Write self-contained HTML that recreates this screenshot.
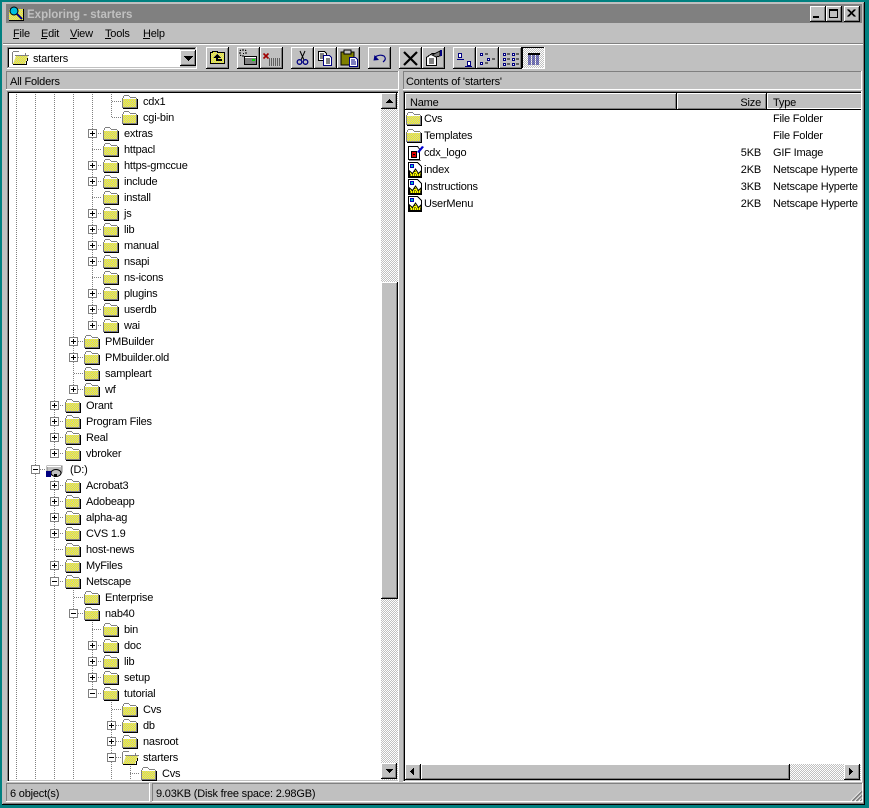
<!DOCTYPE html>
<html><head><meta charset="utf-8"><title>Exploring - starters</title>
<style>
html,body{margin:0;padding:0;background:#008080;width:869px;height:808px;overflow:hidden}
svg{display:block}
text{font-family:"Liberation Sans",sans-serif;font-size:11px;letter-spacing:-.2px;fill:#000;shape-rendering:auto}
.b{fill:#000}.g{fill:#808080}.w{fill:#fff}.c{fill:#c0c0c0}
</style></head><body>
<svg xmlns="http://www.w3.org/2000/svg" width="869" height="808" viewBox="0 0 869 808" shape-rendering="crispEdges">
<defs>
<pattern id="d" width="2" height="2" patternUnits="userSpaceOnUse"><rect width="2" height="2" fill="#c0c0c0"/><rect width="1" height="1" fill="#fff"/><rect x="1" y="1" width="1" height="1" fill="#fff"/></pattern>
<pattern id="y" width="2" height="2" patternUnits="userSpaceOnUse"><rect width="2" height="2" fill="#ffff00"/><rect width="1" height="1" fill="#c0c0c0"/><rect x="1" y="1" width="1" height="1" fill="#c0c0c0"/></pattern>
<pattern id="dv" width="1" height="2" patternUnits="userSpaceOnUse"><rect width="1" height="1" fill="#808080"/></pattern>
<pattern id="dh" width="2" height="1" patternUnits="userSpaceOnUse"><rect width="1" height="1" fill="#808080"/></pattern>
<symbol id="f" width="16" height="14" viewBox="0 0 16 14">
<rect x="1" y="3" width="13" height="9" fill="url(#y)"/>
<rect x="2" y="0" width="5" height="1" fill="#808080"/><rect x="1" y="1" width="1" height="2" fill="#808080"/><rect x="7" y="1" width="1" height="1" fill="#808080"/><rect x="8" y="2" width="6" height="1" fill="#808080"/>
<rect x="2" y="1" width="5" height="2" fill="#fff"/>
<rect x="0" y="3" width="1" height="10" fill="#808080"/><rect x="1" y="3" width="13" height="1" fill="#fff"/><rect x="14" y="3" width="1" height="10" fill="#808080"/><rect x="1" y="12" width="14" height="1" fill="#808080"/><rect x="15" y="4" width="1" height="10" fill="#000"/><rect x="1" y="13" width="15" height="1" fill="#000"/>
</symbol>
<symbol id="o" width="17" height="14" viewBox="0 0 17 14">
<rect x="1" y="0" width="6" height="1" fill="#808080"/><rect x="0" y="1" width="1" height="12" fill="#808080"/><rect x="7" y="1" width="6" height="1" fill="#808080"/><rect x="1" y="1" width="12" height="3" fill="#fff"/><rect x="13" y="2" width="1" height="3" fill="#808080"/>
<path d="M1 13L4 5H16L13 13Z" fill="url(#y)" shape-rendering="auto"/>
<rect x="3" y="4" width="14" height="1" fill="#808080"/><rect x="1" y="13" width="13" height="1" fill="#000"/><rect x="14" y="10" width="1" height="4" fill="#000"/><rect x="15" y="7" width="1" height="3" fill="#000"/>
</symbol>
<symbol id="p" width="9" height="9" viewBox="0 0 9 9"><rect width="9" height="9" fill="#808080"/><rect x="1" y="1" width="7" height="7" fill="#fff"/><rect x="2" y="4" width="5" height="1" fill="#000"/><rect x="4" y="2" width="1" height="5" fill="#000"/></symbol>
<symbol id="m" width="9" height="9" viewBox="0 0 9 9"><rect width="9" height="9" fill="#808080"/><rect x="1" y="1" width="7" height="7" fill="#fff"/><rect x="2" y="4" width="5" height="1" fill="#000"/></symbol>
<symbol id="bt" width="23" height="22" viewBox="0 0 23 22"><rect width="23" height="22" fill="#000"/><rect width="22" height="21" fill="#fff"/><rect x="1" y="1" width="21" height="20" fill="#808080"/><rect x="1" y="1" width="20" height="19" fill="#c0c0c0"/></symbol>
<symbol id="sb" width="16" height="16" viewBox="0 0 16 16"><rect width="16" height="16" fill="#000"/><rect width="15" height="15" fill="#fff"/><rect x="1" y="1" width="14" height="14" fill="#808080"/><rect x="1" y="1" width="13" height="13" fill="#c0c0c0"/></symbol>
<symbol id="h" width="15" height="16" viewBox="0 0 15 16">
<path d="M0 0H10L14 4V15H0Z" fill="#fff"/><path d="M0.5 .5H9.5L13.5 4.500V15.500H.5Z" fill="none" stroke="#000"/>
<rect x="2" y="2" width="4" height="4" fill="#0000c0"/><rect x="3" y="3" width="2" height="2" fill="#00c0c0"/>
<path d="M1.500 14.500V9L4.500 11.500L7.500 7L10.500 11.500L13 9V14.500Z" fill="#ffff00" stroke="#000" shape-rendering="auto"/>
<path d="M2 13H13M4 11V13M7 9V13M10 11V13" stroke="#000" fill="none" stroke-dasharray="1 1"/>
</symbol>
<symbol id="gi" width="16" height="16" viewBox="0 0 16 16">
<rect x="0" y="1" width="12" height="14" fill="#fff"/><path d="M.5 1.500H9.500L11.500 4V14.500H.5Z" fill="none" stroke="#000"/><rect x="1" y="15" width="12" height="1" fill="#808080"/>
<rect x="3" y="6" width="6" height="7" fill="#000"/><rect x="4" y="7" width="4" height="5" fill="#e00000"/><rect x="5" y="9" width="2" height="1" fill="#000"/>
<path d="M9 7L14 1L16 2L11 8Z" fill="#0000d0" shape-rendering="auto"/>
</symbol>
</defs>

<rect width="869" height="808" fill="#008080"/>
<rect x="2" y="2" width="863" height="803" class="b"/>
<rect x="2" y="2" width="862" height="802" fill="#fff" opacity=".75"/>
<rect x="3" y="3" width="861" height="801" class="g"/>
<rect x="3" y="3" width="860" height="800" class="c"/>

<!-- title bar -->
<rect x="6" y="4" width="856" height="19" class="g"/>
<rect x="9" y="8" width="14" height="13" fill="url(#y)"/><rect x="9" y="8" width="14" height="1" fill="#808080"/><rect x="9" y="20" width="15" height="1" class="b"/><rect x="23" y="9" width="1" height="12" class="b"/>
<circle cx="14" cy="11" r="4" fill="#00c0e0" stroke="#000" shape-rendering="auto"/><path d="M17 14L22 19" stroke="#000080" stroke-width="2" shape-rendering="auto"/>
<text x="27" y="18" style="font-weight:bold;font-size:11.5px;letter-spacing:0;fill:#c0c0c0">Exploring - starters</text>
<use href="#sb" x="810" y="6"/><rect x="813" y="16" width="6" height="2" class="b"/>
<use href="#sb" x="826" y="6"/><rect x="829" y="9" width="9" height="9" class="b"/><rect x="830" y="11" width="7" height="6" class="c"/>
<use href="#sb" x="844" y="6"/><path d="M848 10l7 7M849 10l7 7M855 10l-7 7M856 10l-7 7" stroke="#000" shape-rendering="auto" transform="translate(-.5 -.5)"/>

<!-- menu -->
<text x="13" y="37">File</text><rect x="13" y="38" width="6" height="1" class="b"/>
<text x="41" y="37">Edit</text><rect x="41" y="38" width="6" height="1" class="b"/>
<text x="70" y="37">View</text><rect x="70" y="38" width="7" height="1" class="b"/>
<text x="105" y="37">Tools</text><rect x="105" y="38" width="6" height="1" class="b"/>
<text x="143" y="37">Help</text><rect x="143" y="38" width="7" height="1" class="b"/>
<rect x="3" y="43" width="860" height="1" class="g"/><rect x="3" y="44" width="860" height="1" class="w"/>

<!-- combo -->
<rect x="7" y="47" width="190" height="22" class="w"/><rect x="7" y="47" width="189" height="21" class="g"/><rect x="8" y="48" width="188" height="20" class="c"/><rect x="8" y="48" width="187" height="1" class="b"/><rect x="8" y="48" width="1" height="19" class="b"/>
<rect x="9" y="49" width="171" height="18" class="w"/>
<use href="#o" x="12" y="51"/>
<text x="33" y="62">starters</text>
<use href="#sb" x="180" y="50"/><path d="M184 56h9v1h-1v1h-1v1h-1v1h-1v1h-1v-1h-1v-1h-1v-1h-1v-1h-1z" class="b"/>

<!-- toolbar buttons -->
<use href="#bt" x="206" y="47"/><use href="#bt" x="237" y="47"/><use href="#bt" x="260" y="47"/><use href="#bt" x="291" y="47"/><use href="#bt" x="314" y="47"/><use href="#bt" x="337" y="47"/><use href="#bt" x="368" y="47"/><use href="#bt" x="399" y="47"/><use href="#bt" x="422" y="47"/><use href="#bt" x="453" y="47"/><use href="#bt" x="476" y="47"/><use href="#bt" x="499" y="47"/>
<rect x="522" y="47" width="23" height="22" class="w"/><rect x="522" y="47" width="22" height="21" class="b"/><rect x="523" y="48" width="21" height="20" fill="url(#d)"/>
<!-- up -->
<path d="M210.500 63.500V52.500H212.500V51.500H217.500V52.500H224.500V63.500Z" fill="url(#y)" stroke="#000"/><path d="M217 54L213 58H216V61H222V59H218V58H221Z" class="b"/>
<!-- map drive -->
<rect x="244" y="56" width="13" height="9" class="b"/><rect x="245" y="57" width="11" height="7" class="g"/><rect x="245" y="57" width="11" height="1" class="w"/><rect x="252" y="59" width="3" height="2" fill="#00e000"/>
<path d="M243 49v2M243 55v2M239 53h2M245 53h2M240 50l1 1M246 50l-1 1M240 56l1-1" stroke="#000"/><rect x="243" y="53" width="1" height="1" class="b"/>
<!-- disconnect -->
<path d="M263.500 53.500l5 5M268.500 53.500l-5 5" stroke="#a00000" stroke-width="1.600" shape-rendering="auto"/>
<path d="M269 59h12M269 61h12M269 63h12M269 65h12" stroke="#000" stroke-dasharray="1 1"/>
<!-- cut -->
<path d="M300 51l4 9M305 51l-4 9" stroke="#000" fill="none" shape-rendering="auto"/><circle cx="299.500" cy="62" r="2.300" fill="none" stroke="#000080" stroke-width="1.300" shape-rendering="auto"/><circle cx="305.500" cy="62" r="2.300" fill="none" stroke="#000080" stroke-width="1.300" shape-rendering="auto"/>
<!-- copy -->
<path d="M318.500 51.500H324.500L326.500 53.500V60.500H318.500Z" fill="#fff" stroke="#000"/><path d="M324.500 55.500H329.500L331.500 57.500V65.500H323.500V55.500Z" fill="#fff" stroke="#000080"/><path d="M320 54h4M320 56h3M320 58h3M326 59h4M326 61h4M326 63h4" stroke="#000"/>
<!-- paste -->
<rect x="341" y="52" width="13" height="13" fill="#808000" stroke="#000"/><rect x="344" y="50" width="7" height="4" fill="#c0c0c0" stroke="#000"/><path d="M349.500 57.500H355.500L357.500 59.500V66.500H349.500Z" fill="#fff" stroke="#000080"/><path d="M351 60h4M351 62h5M351 64h5" stroke="#000080"/>
<!-- undo -->
<path d="M375 57Q380 54 384 56Q387 59 383 62" fill="none" stroke="#000080" stroke-width="1.200" shape-rendering="auto"/><path d="M373.500 60.500L374.500 55L379 60Z" fill="#000080" shape-rendering="auto"/>
<!-- delete X -->
<path d="M404 52L417 65M417 52L404 65" stroke="#000" stroke-width="2.200" shape-rendering="auto"/>
<!-- props -->
<path d="M426.500 57.500L432 53.500H436.500V65.500H426.500Z" fill="#fff" stroke="#000"/><path d="M429 59h5M429 61h5M429 63h5" stroke="#000"/><path d="M432 55L440 51V56L436 57Z" fill="#808080" stroke="#000"/><rect x="440" y="50" width="2" height="6" fill="#000080"/>
<!-- views -->
<path d="M458.500 53.500H461.500V57.500H458.500ZM467.500 61.500H470.500V65.500H467.500Z" fill="#fff" stroke="#000080"/><rect x="457" y="59" width="7" height="1" fill="#000080"/><rect x="465" y="66" width="7" height="1" fill="#000080"/>
<path d="M480.500 53.500h2v2h-2zM487.500 58.500h2v2h-2zM480.500 62.500h2v2h-2z" fill="#fff" stroke="#000080"/><path d="M485 54h3M492 59h3M485 63h3" stroke="#000"/>
<path d="M503.500 53.500h2v2h-2zM512.500 53.500h2v2h-2zM503.500 58.500h2v2h-2zM512.500 58.500h2v2h-2zM503.500 63.500h2v2h-2zM512.500 63.500h2v2h-2z" fill="#fff" stroke="#000080"/><path d="M507 54h3M516 54h3M507 59h3M516 59h3M507 64h3M516 64h3" stroke="#000"/>
<rect x="528" y="53" width="12" height="2" class="b"/><path d="M528 56h12M528 58h12M528 60h12M528 62h12M528 64h12" stroke="#000080" stroke-dasharray="3 1"/>

<!-- pane headers -->
<rect x="6" y="71" width="393" height="19" class="w"/><rect x="6" y="71" width="392" height="18" class="g"/><rect x="7" y="72" width="391" height="17" class="c"/>
<text x="10" y="85">All Folders</text>
<rect x="403" y="71" width="459" height="19" class="w"/><rect x="403" y="71" width="458" height="18" class="g"/><rect x="404" y="72" width="457" height="17" class="c"/>
<text x="406" y="85">Contents of 'starters'</text>

<!-- tree pane -->
<rect x="7" y="91" width="392" height="691" class="w"/><rect x="7" y="91" width="391" height="690" class="g"/><rect x="8" y="92" width="390" height="689" class="b"/><rect x="9" y="93" width="389" height="688" class="c"/><rect x="9" y="93" width="372" height="687" class="w"/>
<rect x="381" y="93" width="17" height="687" fill="url(#d)"/>
<use href="#sb" x="381" y="93"/><path d="M389 98h1v1h1v1h1v1h1v1h-7v-1h1v-1h1v-1h1z" class="b" transform="translate(0 1)"/>
<rect x="381" y="282" width="17" height="317" class="b"/><rect x="381" y="282" width="16" height="316" class="w"/><rect x="382" y="283" width="15" height="315" class="g"/><rect x="382" y="283" width="14" height="314" class="c"/>
<use href="#sb" x="381" y="763"/><path d="M386 769h7v1h-1v1h-1v1h-1v1h-1v-1h-1v-1h-1v-1h-1z" class="b"/>

<!-- tree lines -->
<rect x="16" y="93" width="1" height="686" fill="url(#dv)"/>
<rect x="35" y="93" width="1" height="686" fill="url(#dv)"/>
<rect x="54" y="93" width="1" height="360" fill="url(#dv)"/>
<rect x="54" y="469" width="1" height="310" fill="url(#dv)"/>
<rect x="73" y="93" width="1" height="296" fill="url(#dv)"/>
<rect x="73" y="581" width="1" height="198" fill="url(#dv)"/>
<rect x="92" y="93" width="1" height="232" fill="url(#dv)"/>
<rect x="92" y="613" width="1" height="80" fill="url(#dv)"/>
<rect x="111" y="93" width="1" height="24" fill="url(#dv)"/>
<rect x="111" y="693" width="1" height="86" fill="url(#dv)"/>
<rect x="130" y="757" width="1" height="22" fill="url(#dv)"/>
<g fill="url(#dh)">
<rect x="111" y="101" width="10" height="1"/><rect x="111" y="117" width="10" height="1"/>
<rect x="92" y="133" width="10" height="1"/><rect x="92" y="149" width="10" height="1"/><rect x="92" y="165" width="10" height="1"/><rect x="92" y="181" width="10" height="1"/><rect x="92" y="197" width="10" height="1"/><rect x="92" y="213" width="10" height="1"/><rect x="92" y="229" width="10" height="1"/><rect x="92" y="245" width="10" height="1"/><rect x="92" y="261" width="10" height="1"/><rect x="92" y="277" width="10" height="1"/><rect x="92" y="293" width="10" height="1"/><rect x="92" y="309" width="10" height="1"/><rect x="92" y="325" width="10" height="1"/>
<rect x="73" y="341" width="10" height="1"/><rect x="73" y="357" width="10" height="1"/><rect x="73" y="373" width="10" height="1"/><rect x="73" y="389" width="10" height="1"/>
<rect x="54" y="405" width="10" height="1"/><rect x="54" y="421" width="10" height="1"/><rect x="54" y="437" width="10" height="1"/><rect x="54" y="453" width="10" height="1"/>
<rect x="35" y="469" width="10" height="1"/>
<rect x="54" y="485" width="10" height="1"/><rect x="54" y="501" width="10" height="1"/><rect x="54" y="517" width="10" height="1"/><rect x="54" y="533" width="10" height="1"/><rect x="54" y="549" width="10" height="1"/><rect x="54" y="565" width="10" height="1"/><rect x="54" y="581" width="10" height="1"/>
<rect x="73" y="597" width="10" height="1"/><rect x="73" y="613" width="10" height="1"/>
<rect x="92" y="629" width="10" height="1"/><rect x="92" y="645" width="10" height="1"/><rect x="92" y="661" width="10" height="1"/><rect x="92" y="677" width="10" height="1"/><rect x="92" y="693" width="10" height="1"/>
<rect x="111" y="709" width="10" height="1"/><rect x="111" y="725" width="10" height="1"/><rect x="111" y="741" width="10" height="1"/><rect x="111" y="757" width="10" height="1"/>
<rect x="130" y="773" width="10" height="1"/>
</g>

<!-- tree boxes -->
<use href="#p" x="88" y="129"/><use href="#p" x="88" y="161"/><use href="#p" x="88" y="177"/><use href="#p" x="88" y="209"/><use href="#p" x="88" y="225"/><use href="#p" x="88" y="241"/><use href="#p" x="88" y="257"/><use href="#p" x="88" y="289"/><use href="#p" x="88" y="305"/><use href="#p" x="88" y="321"/>
<use href="#p" x="69" y="337"/><use href="#p" x="69" y="353"/><use href="#p" x="69" y="385"/>
<use href="#p" x="50" y="401"/><use href="#p" x="50" y="417"/><use href="#p" x="50" y="433"/><use href="#p" x="50" y="449"/>
<use href="#m" x="31" y="465"/>
<use href="#p" x="50" y="481"/><use href="#p" x="50" y="497"/><use href="#p" x="50" y="513"/><use href="#p" x="50" y="529"/><use href="#p" x="50" y="561"/><use href="#m" x="50" y="577"/>
<use href="#m" x="69" y="609"/>
<use href="#p" x="88" y="641"/><use href="#p" x="88" y="657"/><use href="#p" x="88" y="673"/><use href="#m" x="88" y="689"/>
<use href="#p" x="107" y="721"/><use href="#p" x="107" y="737"/><use href="#m" x="107" y="753"/>

<!-- tree folders -->
<use href="#f" x="122" y="95"/><use href="#f" x="122" y="111"/>
<use href="#f" x="103" y="127"/><use href="#f" x="103" y="143"/><use href="#f" x="103" y="159"/><use href="#f" x="103" y="175"/><use href="#f" x="103" y="191"/><use href="#f" x="103" y="207"/><use href="#f" x="103" y="223"/><use href="#f" x="103" y="239"/><use href="#f" x="103" y="255"/><use href="#f" x="103" y="271"/><use href="#f" x="103" y="287"/><use href="#f" x="103" y="303"/><use href="#f" x="103" y="319"/>
<use href="#f" x="84" y="335"/><use href="#f" x="84" y="351"/><use href="#f" x="84" y="367"/><use href="#f" x="84" y="383"/>
<use href="#f" x="65" y="399"/><use href="#f" x="65" y="415"/><use href="#f" x="65" y="431"/><use href="#f" x="65" y="447"/>
<use href="#f" x="65" y="479"/><use href="#f" x="65" y="495"/><use href="#f" x="65" y="511"/><use href="#f" x="65" y="527"/><use href="#f" x="65" y="543"/><use href="#f" x="65" y="559"/><use href="#f" x="65" y="575"/>
<use href="#f" x="84" y="591"/><use href="#f" x="84" y="607"/>
<use href="#f" x="103" y="623"/><use href="#f" x="103" y="639"/><use href="#f" x="103" y="655"/><use href="#f" x="103" y="671"/><use href="#f" x="103" y="687"/>
<use href="#f" x="122" y="703"/><use href="#f" x="122" y="719"/><use href="#f" x="122" y="735"/><use href="#o" x="122" y="751"/>
<use href="#f" x="141" y="767"/>
<!-- drive -->
<path d="M47 466H62V472L60 475H48L47 472Z" fill="#c0c0c0" stroke="#808080"/><rect x="47" y="466" width="14" height="1" class="w"/><ellipse cx="56" cy="473" rx="5" ry="3.500" fill="#c0c0c0" stroke="#000" shape-rendering="auto"/><rect x="46" y="471" width="5" height="6" fill="#000080"/><rect x="54" y="474" width="3" height="3" class="b"/>

<!-- tree text -->
<text x="143" y="105">cdx1</text><text x="143" y="121">cgi-bin</text>
<text x="124" y="137">extras</text><text x="124" y="153">httpacl</text><text x="124" y="169">https-gmccue</text><text x="124" y="185">include</text><text x="124" y="201">install</text><text x="124" y="217">js</text><text x="124" y="233">lib</text><text x="124" y="249">manual</text><text x="124" y="265">nsapi</text><text x="124" y="281">ns-icons</text><text x="124" y="297">plugins</text><text x="124" y="313">userdb</text><text x="124" y="329">wai</text>
<text x="105" y="345">PMBuilder</text><text x="105" y="361">PMbuilder.old</text><text x="105" y="377">sampleart</text><text x="105" y="393">wf</text>
<text x="86" y="409">Orant</text><text x="86" y="425">Program Files</text><text x="86" y="441">Real</text><text x="86" y="457">vbroker</text>
<text x="70" y="473">(D:)</text>
<text x="86" y="489">Acrobat3</text><text x="86" y="505">Adobeapp</text><text x="86" y="521">alpha-ag</text><text x="86" y="537">CVS 1.9</text><text x="86" y="553">host-news</text><text x="86" y="569">MyFiles</text><text x="86" y="585">Netscape</text>
<text x="105" y="601">Enterprise</text><text x="105" y="617">nab40</text>
<text x="124" y="633">bin</text><text x="124" y="649">doc</text><text x="124" y="665">lib</text><text x="124" y="681">setup</text><text x="124" y="697">tutorial</text>
<text x="143" y="713">Cvs</text><text x="143" y="729">db</text><text x="143" y="745">nasroot</text><text x="143" y="761">starters</text>
<text x="162" y="777">Cvs</text>

<!-- list pane -->
<rect x="403" y="91" width="459" height="691" class="w"/><rect x="403" y="91" width="458" height="690" class="g"/><rect x="404" y="92" width="457" height="689" class="b"/><rect x="405" y="93" width="456" height="688" class="c"/><rect x="405" y="110" width="456" height="654" class="w"/>
<!-- header -->
<rect x="405" y="93" width="456" height="17" class="b"/>
<rect x="405" y="93" width="271" height="16" class="w"/><rect x="406" y="94" width="270" height="15" class="g"/><rect x="406" y="94" width="269" height="14" class="c"/>
<rect x="677" y="93" width="89" height="16" class="w"/><rect x="678" y="94" width="88" height="15" class="g"/><rect x="678" y="94" width="87" height="14" class="c"/>
<rect x="767" y="93" width="94" height="16" class="w"/><rect x="768" y="94" width="93" height="14" class="c"/>
<text x="410" y="106">Name</text><text x="761" y="106" text-anchor="end">Size</text><text x="773" y="106">Type</text>

<use href="#f" x="406" y="112"/><use href="#f" x="406" y="129"/>
<use href="#gi" x="408" y="145"/><use href="#h" x="408" y="162"/><use href="#h" x="408" y="179"/><use href="#h" x="408" y="196"/>
<text x="424" y="122">Cvs</text><text x="773" y="122">File Folder</text>
<text x="424" y="139">Templates</text><text x="773" y="139">File Folder</text>
<text x="424" y="156">cdx_logo</text><text x="761" y="156" text-anchor="end">5KB</text><text x="773" y="156">GIF Image</text>
<text x="424" y="173">index</text><text x="761" y="173" text-anchor="end">2KB</text><text x="773" y="173">Netscape Hyperte</text>
<text x="424" y="190">Instructions</text><text x="761" y="190" text-anchor="end">3KB</text><text x="773" y="190">Netscape Hyperte</text>
<text x="424" y="207">UserMenu</text><text x="761" y="207" text-anchor="end">2KB</text><text x="773" y="207">Netscape Hyperte</text>

<!-- horizontal scrollbar -->
<rect x="405" y="764" width="456" height="17" class="c"/>
<rect x="405" y="764" width="456" height="16" fill="url(#d)"/>
<use href="#sb" x="405" y="764"/><path d="M414 768v7h-1v-1h-1v-1h-1v-1h-1v-1h1v-1h1v-1h1v-1z" class="b"/>
<rect x="421" y="764" width="369" height="16" class="b"/><rect x="421" y="764" width="368" height="15" class="w"/><rect x="422" y="765" width="367" height="14" class="g"/><rect x="422" y="765" width="366" height="13" class="c"/>
<use href="#sb" x="844" y="764"/><path d="M849 768v7h1v-1h1v-1h1v-1h1v-1h-1v-1h-1v-1h-1v-1z" class="b"/>

<!-- status bar -->
<rect x="6" y="783" width="144" height="19" class="w"/><rect x="6" y="783" width="143" height="18" class="g"/><rect x="7" y="784" width="142" height="17" class="c"/>
<rect x="152" y="783" width="711" height="19" class="w"/><rect x="152" y="783" width="710" height="18" class="g"/><rect x="153" y="784" width="709" height="17" class="c"/>
<text x="10" y="797">6 object(s)</text>
<text x="156" y="797">9.03KB (Disk free space: 2.98GB)</text>
<g shape-rendering="auto" stroke-width="1">
<path d="M851 801L861 791M855 801L861 795M859 801L861 799" stroke="#fff"/>
<path d="M852 801L862 791M853 801L862 792M856 801L862 795M857 801L862 796M860 801L862 799" stroke="#808080"/>
</g>
</svg>
</body></html>
